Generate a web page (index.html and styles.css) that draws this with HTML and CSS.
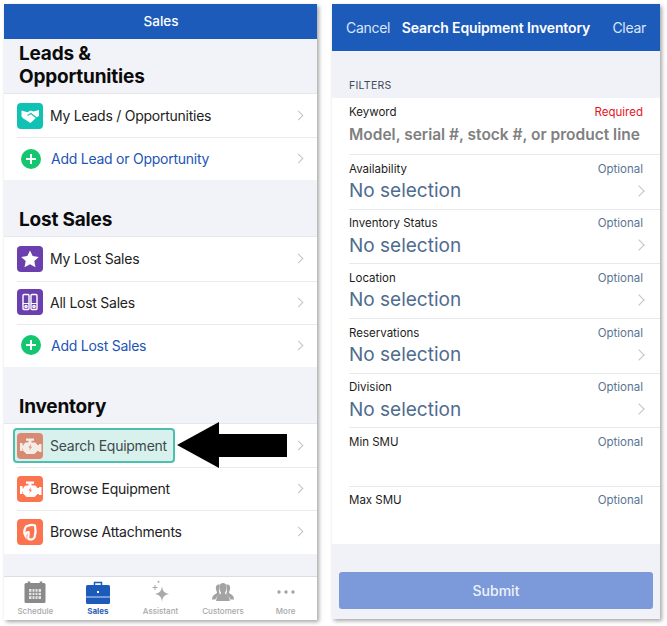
FILE: index.html
```html
<!DOCTYPE html>
<html lang="en">
<head>
<meta charset="utf-8">
<title>Sales and Search Equipment Inventory</title>
<link rel="stylesheet" href="styles.css">
</head>
<body>
<div class="stage">
  <section class="phone left-phone">
    <header class="bar sales-bar">Sales</header>
    <main class="menu">
      <h2 class="section-title first">Leads &amp;<br>Opportunities</h2>
      <ul class="list">
        <li class="row"><span class="row-main"><svg class="icon" viewBox="0 0 26 26"><rect width="26" height="26" rx="4" fill="#0fc2b4"/><path d="M4.500 7.500l6 1.800 3-1.800 3 1 5.500-1.500v6l-2 1-6.500 6-7.500-4.800-1.500-2z" fill="#fff"/><path d="M10.500 12.500l3.500-2 5.500 4.500" fill="none" stroke="#0fc2b4" stroke-width="1.200"/></svg><span>My Leads / Opportunities</span></span><i class="chev"></i></li>
        <li class="row"><span class="row-main"><svg class="icon add" viewBox="0 0 26 26"><circle cx="13" cy="13" r="10" fill="#14c66f"/><path d="M13 8v10M8 13h10" stroke="#fff" stroke-width="2"/></svg><span class="link">Add Lead or Opportunity</span></span><i class="chev"></i></li>
      </ul>
      <h2 class="section-title">Lost Sales</h2>
      <ul class="list">
        <li class="row"><span class="row-main"><svg class="icon" viewBox="0 0 26 26"><rect width="26" height="26" rx="4" fill="#6c3fae"/><path d="M13 4.500l2.700 5.600 6.100.8-4.500 4.200 1.200 6.100-5.500-3-5.500 3 1.200-6.100-4.500-4.200 6.100-.8z" fill="#fff"/></svg><span>My Lost Sales</span></span><i class="chev"></i></li>
        <li class="row"><span class="row-main"><svg class="icon" viewBox="0 0 26 26"><rect width="26" height="26" rx="4" fill="#6c3fae"/><g fill="none" stroke="#fff" stroke-width="1.400"><rect x="6" y="5.500" width="6" height="15" rx="1"/><rect x="14" y="5.500" width="6" height="15" rx="1"/><circle cx="9" cy="17.500" r="1.100"/><circle cx="17" cy="17.500" r="1.100"/></g><path d="M6 14.500h6M14 14.500h6" stroke="#fff" stroke-width="1.200"/></svg><span>All Lost Sales</span></span><i class="chev"></i></li>
        <li class="row"><span class="row-main"><svg class="icon add" viewBox="0 0 26 26"><circle cx="13" cy="13" r="10" fill="#14c66f"/><path d="M13 8v10M8 13h10" stroke="#fff" stroke-width="2"/></svg><span class="link">Add Lost Sales</span></span><i class="chev"></i></li>
      </ul>
      <h2 class="section-title">Inventory</h2>
      <ul class="list">
        <li class="row"><span class="row-main highlight"><svg class="icon" viewBox="0 0 26 26"><rect width="26" height="26" rx="4" fill="#d98a73"/><path d="M9 5.500h8v2.200h-2.500v1.800h4l2 2.500h1.500v-1H24.500v8H22v-1h-1.500l-3 3h-8L6 17.500v-2H5.500V18H3v-8h2.500v2.500h1v-1l2-2h3V7.700H9z" fill="#f4ece6"/><path d="M14 11l-2.500 3.500h1.700l-.9 3 2.700-3.700h-1.700z" fill="#d98a73"/></svg><span class="dim">Search Equipment</span></span><i class="chev"></i></li>
        <li class="row"><span class="row-main"><svg class="icon" viewBox="0 0 26 26"><rect width="26" height="26" rx="4" fill="#fc7350"/><path d="M9 5.500h8v2.200h-2.500v1.800h4l2 2.500h1.500v-1H24.500v8H22v-1h-1.500l-3 3h-8L6 17.500v-2H5.500V18H3v-8h2.500v2.500h1v-1l2-2h3V7.700H9z" fill="#fff"/><path d="M14 11l-2.500 3.500h1.700l-.9 3 2.700-3.700h-1.700z" fill="#fc7350"/></svg><span>Browse Equipment</span></span><i class="chev"></i></li>
        <li class="row"><span class="row-main"><svg class="icon" viewBox="0 0 26 26"><rect width="26" height="26" rx="4" fill="#fc7350"/><path d="M9 7.500c3-1.500 7-2 9-1 1 4 .5 9-.5 12-1 2-4 2.500-6 1.500-1-3 1-5 0-7-2 0-3 2-3 4-2-3-1-7 .5-9.500z" fill="none" stroke="#fff" stroke-width="2.200"/></svg><span>Browse Attachments</span></span><i class="chev"></i></li>
      </ul>
    </main>
    <nav class="tabs">
      <div class="tab"><svg viewBox="0 0 24 24" width="24" height="24"><rect x="1.500" y="3" width="21" height="20" rx="1.500" fill="#8a8a8a"/><path d="M6 1.500v3M18 1.500v3" stroke="#8a8a8a" stroke-width="2.500"/><g fill="#e4e4e4"><rect x="6" y="9" width="12" height="10"/></g><path d="M9 9v10M12 9v10M15 9v10M6 12.300h12M6 15.600h12" stroke="#8a8a8a"/></svg><span>Schedule</span></div>
      <div class="tab active"><svg viewBox="0 0 24 24" width="24" height="24"><path d="M8.500 5V2.500h7V5" fill="none" stroke="#1d5bbb" stroke-width="1.500"/><rect y="5" width="24" height="19" rx="1.500" fill="#1d5bbb"/><path d="M0 17h24" stroke="#fff" stroke-width=".8"/><rect x="11" y="11" width="2" height="2" fill="#fff"/></svg><span>Sales</span></div>
      <div class="tab"><svg viewBox="0 0 24 24" width="24" height="24"><path d="M14 6c.6 5 2 7 7 8-5 1-6.400 3-7 8-.6-5-2-7-7-8 5-1 6.400-3 7-8z" fill="#a9a9a9"/><path d="M7 5v5M4.500 7.500h5" stroke="#a9a9a9"/><circle cx="10.500" cy="1.800" r="1" fill="#a9a9a9"/></svg><span>Assistant</span></div>
      <div class="tab"><svg viewBox="0 0 24 24" width="24" height="24"><path d="M12 3c3 0 4 3 3.500 6-.3 2-1.500 3-1.500 4 0 1.500 3 2 4 4 .6 1.200.8 3 .8 4H5.200c0-1 .2-2.800.8-4 1-2 4-2.500 4-4 0-1-1.200-2-1.500-4C8 6 9 3 12 3z" fill="#a3a3a3"/><path d="M7.800 4.500C5 4.500 4.500 7 5 9.500c.3 1.500 1 2.300 1 3 0 1-2.500 1.500-4 3.500-.7 1-1 2.500-1 3.500h3.500c.4-2 2-3.500 4.500-5-1-2-1.500-6-.2-10zM16.200 4.500c2.800 0 3.300 2.500 2.800 5-.3 1.500-1 2.300-1 3 0 1 2.500 1.500 4 3.500.7 1 1 2.500 1 3.500h-3.500c-.4-2-2-3.500-4.500-5 1-2 1.500-6 .2-10z" fill="#a3a3a3"/></svg><span>Customers</span></div>
      <div class="tab"><svg viewBox="0 0 24 24" width="24" height="24"><g fill="#a3a3a3"><circle cx="5" cy="12" r="1.700"/><circle cx="12" cy="12" r="1.700"/><circle cx="19" cy="12" r="1.700"/></g></svg><span>More</span></div>
    </nav>
    <svg class="arrow" viewBox="0 0 110 46" width="110" height="46"><path d="M0 23L42 0v12h68v23H42v11z" fill="#000"/></svg>
  </section>

  <section class="phone right-phone">
    <header class="bar form-bar"><span class="bar-action">Cancel</span><strong>Search Equipment Inventory</strong><span class="bar-action end">Clear</span></header>
    <main class="form">
      <div class="filters">FILTERS</div>
      <div class="fields">
        <div class="field keyword"><div class="field-head"><span>Keyword</span><span class="required">Required</span></div><div class="placeholder">Model, serial #, stock #, or product line</div></div>
        <div class="field"><div class="field-head"><span>Availability</span><span class="optional">Optional</span></div><div class="value"><span>No selection</span><i class="chev"></i></div></div>
        <div class="field"><div class="field-head"><span>Inventory Status</span><span class="optional">Optional</span></div><div class="value"><span>No selection</span><i class="chev"></i></div></div>
        <div class="field"><div class="field-head"><span>Location</span><span class="optional">Optional</span></div><div class="value"><span>No selection</span><i class="chev"></i></div></div>
        <div class="field"><div class="field-head"><span>Reservations</span><span class="optional">Optional</span></div><div class="value"><span>No selection</span><i class="chev"></i></div></div>
        <div class="field"><div class="field-head"><span>Division</span><span class="optional">Optional</span></div><div class="value"><span>No selection</span><i class="chev"></i></div></div>
        <div class="field tall"><div class="field-head"><span>Min SMU</span><span class="optional">Optional</span></div></div>
        <div class="field tall"><div class="field-head"><span>Max SMU</span><span class="optional">Optional</span></div></div>
      </div>
      <button class="submit" type="button">Submit</button>
    </main>
  </section>
</div>
</body>
</html>
```
FILE: styles.css
```css
* { box-sizing: border-box; }
html, body { margin: 0; padding: 0; background: #fff; }
body { font-family: Inter, "Liberation Sans", sans-serif; color: #222; }
.stage { display: flex; gap: 15px; width: 667px; height: 626px; padding: 4px 0 0 4px; align-items: flex-start; }
.phone { position: relative; display: flex; flex-direction: column; background: #f1f3f9; box-shadow: 2px 2px 4px rgba(0,0,0,.35); }
.left-phone { width: 313px; height: 616px; }
.right-phone { width: 328px; height: 615px; }
.bar { background: #1d5bbb; color: #fff; flex: none; }
.sales-bar { height: 35px; padding-left: 1px; font-size: 13.500px; font-weight: 500; line-height: 35px; text-align: center; }
.form-bar { height: 47px; padding: 0 14px; display: grid; grid-template-columns: 1fr auto 1fr; align-items: center; font-size: 14px; }
.form-bar strong { font-weight: 600; letter-spacing: -.12px; }
.bar-action { color: #dbe6f6; letter-spacing: -.3px; }
.bar-action.end { justify-self: end; }
.menu { flex: 1; overflow: hidden; }
.section-title { margin: 0; padding: 28px 15px 5px; font-size: 19px; line-height: 23px; font-weight: 700; color: #0b0b0b; letter-spacing: -.2px; }
.section-title.first { padding-top: 3px; padding-bottom: 5px; }
.list { list-style: none; margin: 0; padding: 0; background: #fff; border-top: 1px solid #e6e7ea; }
.row { height: 43.200px; display: flex; align-items: center; justify-content: space-between; padding: 0 13px; position: relative; font-size: 14px; letter-spacing: -.25px; }
.row + .row::before { content: ""; position: absolute; left: 13px; right: 0; top: 0; border-top: 1px solid #e9eaed; }
.row-main { display: flex; align-items: center; gap: 7px; }
.icon { width: 26px; height: 26px; flex: none; display: block; }
.icon.add { margin-left: 1px; }
.link { color: #2355b5; }
.highlight { margin: 0 -4px; padding: 0 0 0 3px; height: 35px; width: 162px; background: #d8f1ed; border: 2px solid #4cbfae; border-radius: 4px; gap: 7px; }
.highlight .icon { margin-left: -1px; }
.dim { color: #3c4a4c; white-space: nowrap; }
.chev { width: 7px; height: 7px; border-top: 1.500px solid #c2c3c6; border-right: 1.500px solid #c2c3c6; transform: rotate(45deg); display: block; margin-right: 2px; flex: none; }
.tabs { flex: none; height: 44px; background: #fff; border-top: 1px solid #dcdde0; display: flex; padding: 3px 0 0; }
.tab { flex: 1; display: flex; flex-direction: column; align-items: center; font-size: 8px; font-weight: 500; color: #a8a8a8; gap: 2px; }
.tab svg { display: block; }
.tab.active { color: #2a5fb8; font-weight: 700; }
.arrow { position: absolute; left: 173px; top: 418px; }
.form { flex: 1; display: flex; flex-direction: column; background: #f0f2f7; }
.filters { height: 47px; padding: 28px 17px 0; font-size: 10.500px; line-height: 14px; color: #3d4a57; letter-spacing: .3px; }
.fields { background: #fff; }
.field { height: 54.700px; padding: 7.500px 17px 0; position: relative; }
.field.keyword { height: 56px; padding-top: 7px; }
.field.tall { height: 58.500px; }
.field + .field::before { content: ""; position: absolute; left: 17px; right: 0; top: 0; border-top: 1px solid #e8e9ec; }
.field-head { display: flex; justify-content: space-between; font-size: 11.500px; line-height: 14px; color: #1c1c1c; }
.required { color: #e8131b; }
.optional { color: #5b7492; }
.placeholder { margin-top: 6px; font-size: 15.500px; line-height: 20px; font-weight: 600; color: #808080; white-space: nowrap; }
.value { display: flex; justify-content: space-between; align-items: center; margin-top: 2.500px; font-size: 19px; line-height: 25px; color: #4f6c8f; }
.value .chev { margin-right: 0; width: 8px; height: 8px; }
.submit { display: block; margin: 28px 7px 0; width: 314px; height: 37px; background: #7c9ad9; border: 0; border-radius: 3px; color: #eef2fb; font: 500 14px Inter, "Liberation Sans", sans-serif; }
```
